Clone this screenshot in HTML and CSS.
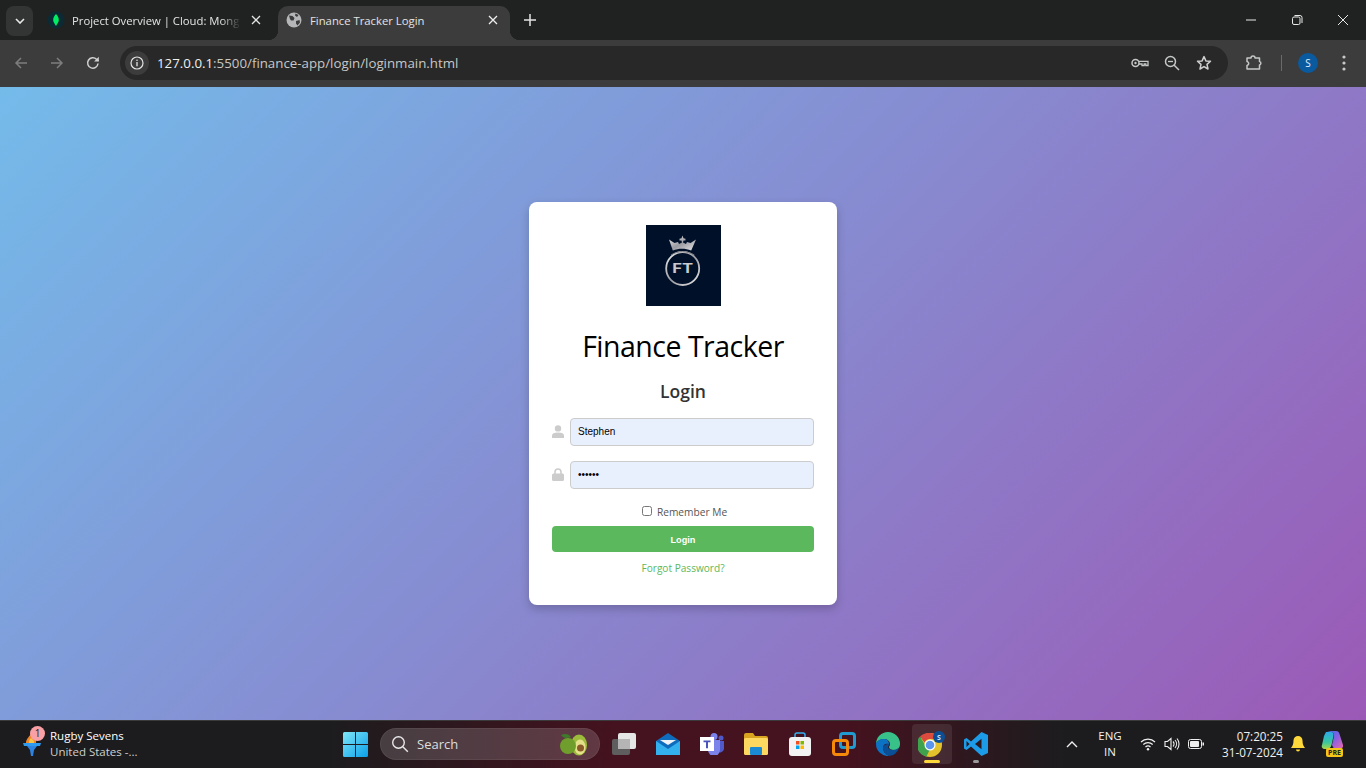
FILE: index.html

```html
<!DOCTYPE html>
<html>
<head>
<meta charset="UTF-8">
<title>Finance Tracker Login</title>
<link rel="stylesheet" href="styles.css">
</head>
<body>
<div id="tabstrip">
  <div class="tabdrop">
    <svg width="10" height="6" viewBox="0 0 10 6"><path d="M1 1l4 4 4-4" fill="none" stroke="#e8e8e8" stroke-width="1.6"/></svg>
  </div>
  <div class="tab">
    <svg class="favicon" width="18" height="18" viewBox="0 0 18 18"><circle cx="9" cy="9" r="8.5" fill="#0c2a33"/><path d="M9 3c2 2.200 2.800 4 2.800 6S10.500 12.500 9 15C7.500 12.500 6.200 11 6.200 9S7 5.200 9 3z" fill="#00ed64"/></svg>
    <span class="tabtitle fade">Project Overview | Cloud: Mong</span>
    <svg class="tabclose" width="10" height="10" viewBox="0 0 10 10"><path d="M1 1l8 8M9 1l-8 8" stroke="#e3e3e3" stroke-width="1.300"/></svg>
  </div>
  <div class="tab active">
    <svg class="favicon" width="16" height="16" viewBox="0 0 16 16"><circle cx="8" cy="8" r="7.500" fill="#b4b6b8"/><path d="M3 3.500l3.500.5 2 2-1 2.500-2.500 0-1-1.500zM9.500 1.500l3 1.500-1.500 2-2-1.500zM10 9l3.500-1 .5 2.500-2.500 3-1.500-2z" fill="#3c3c3c"/></svg>
    <span class="tabtitle">Finance Tracker Login</span>
    <svg class="tabclose" width="10" height="10" viewBox="0 0 10 10"><path d="M1 1l8 8M9 1l-8 8" stroke="#f0f0f0" stroke-width="1.300"/></svg>
  </div>
  <svg class="newtab" width="12" height="12" viewBox="0 0 12 12"><path d="M6 0v12M0 6h12" stroke="#e3e3e3" stroke-width="1.500"/></svg>
  <div class="winbtns">
    <svg width="12" height="12" viewBox="0 0 12 12"><path d="M1 6h10" stroke="#e8e8e8" stroke-width="1"/></svg>
    <svg width="12" height="12" viewBox="0 0 12 12"><rect x="1.500" y="3" width="7.500" height="7.500" rx="1.500" fill="none" stroke="#e8e8e8"/><path d="M3.500 1.500h5.500a2 2 0 0 1 2 2V9" fill="none" stroke="#e8e8e8"/></svg>
    <svg width="12" height="12" viewBox="0 0 12 12"><path d="M1 1l10 10M11 1L1 11" stroke="#e8e8e8" stroke-width="1"/></svg>
  </div>
</div>

<div id="toolbar">
  <svg class="navicon" width="16" height="16" viewBox="0 0 16 16"><path d="M14 8H3M8 3L3 8l5 5" fill="none" stroke="#7d7d7d" stroke-width="1.500"/></svg>
  <svg class="navicon" width="16" height="16" viewBox="0 0 16 16"><path d="M2 8h11M8 3l5 5-5 5" fill="none" stroke="#7d7d7d" stroke-width="1.500"/></svg>
  <svg class="navicon" width="16" height="16" viewBox="0 0 16 16"><path d="M13 8.500A5.200 5.200 0 1 1 11.500 4.300L13.500 6" fill="none" stroke="#d0d0d0" stroke-width="1.500"/><path d="M13.800 1.800v4.700H9.100z" fill="#d0d0d0"/></svg>
  <div id="omnibox">
    <div class="siteinfo">
      <svg width="14" height="14" viewBox="0 0 14 14"><circle cx="7" cy="7" r="6" fill="none" stroke="#e3e3e3" stroke-width="1.200"/><path d="M7 6v4.200" stroke="#e3e3e3" stroke-width="1.300"/><circle cx="7" cy="4.200" r=".8" fill="#e3e3e3"/></svg>
    </div>
    <div class="url"><span class="host">127.0.0.1</span>:5500/finance-app/login/loginmain.html</div>
    <div class="omniicons">
      <svg width="18" height="12" viewBox="0 0 18 12"><circle cx="4.500" cy="6" r="3.500" fill="none" stroke="#c4c7c5" stroke-width="1.500"/><circle cx="4.500" cy="6" r="1.200" fill="#c4c7c5"/><path d="M8 4.300h9v4.200h-2.200V7h-1.600v1.500H11V7H8" fill="none" stroke="#c4c7c5" stroke-width="1.300"/></svg>
      <svg width="16" height="16" viewBox="0 0 16 16"><circle cx="6.500" cy="6.500" r="5" fill="none" stroke="#c4c7c5" stroke-width="1.500"/><path d="M10 10l5 5" stroke="#c4c7c5" stroke-width="1.500"/><path d="M4 6.500h5" stroke="#c4c7c5" stroke-width="1.300"/></svg>
      <svg width="16" height="16" viewBox="0 0 16 16"><path d="M8 1.600l1.900 4.300 4.600.4-3.500 3.100 1 4.600L8 11.600 4 14l1-4.600L1.500 6.300l4.600-.4z" fill="none" stroke="#d0d0d0" stroke-width="1.500" stroke-linejoin="round"/></svg>
    </div>
  </div>
  <svg class="exticon" width="18" height="18" viewBox="0 0 18 18"><path d="M2 4h4a2 2 0 0 1 4 0h4.500v3.500a1.800 1.800 0 0 1 0 3.500V15H2v-3.500a2 2 0 0 0 1-3.500 2 2 0 0 0-1-.5z" fill="none" stroke="#c4c7c5" stroke-width="1.500" stroke-linejoin="round"/></svg>
  <div class="tooldivider"></div>
  <div class="avatar">S</div>
  <svg class="menuicon" width="4" height="16" viewBox="0 0 4 16"><circle cx="2" cy="2" r="1.600" fill="#c8c8c8"/><circle cx="2" cy="8" r="1.600" fill="#c8c8c8"/><circle cx="2" cy="14" r="1.600" fill="#c8c8c8"/></svg>
</div>

<div id="page">
  <div id="card">
    <svg class="logo" width="75" height="81" viewBox="0 0 75 81">
      <defs>
        <linearGradient id="silver" x1="0" y1="0" x2="1" y2="1">
          <stop offset="0" stop-color="#f0f0f0"/><stop offset=".5" stop-color="#9a9aa2"/><stop offset="1" stop-color="#e8e8e8"/>
        </linearGradient>
      </defs>
      <rect width="75" height="81" fill="#001029"/>
      <path d="M23 14.500l5.500 3.500 3.500-1 1 2 3-1.500-.5-2h-2v-1.800l2-.4 1-2.800 1 2.800 2 .4v1.800h-2l-.5 2 3 1.500 1-2 3.500 1 5.500-3.500-4.800 11c-6-2.500-12.400-2.500-18.400 0z" fill="url(#silver)"/>
      <circle cx="36.700" cy="43.500" r="16.500" fill="none" stroke="url(#silver)" stroke-width="1.800"/>
      <path d="M25 30c6.500-4.500 16-4.500 23.400 0" fill="none" stroke="#77777e" stroke-width="1"/>
      <text class="logotext" x="36.700" y="48" text-anchor="middle" fill="#c9c9ce" textLength="21" lengthAdjust="spacingAndGlyphs">FT</text>
    </svg>
    <h1>Finance Tracker</h1>
    <h2>Login</h2>
    <div class="field">
      <svg width="12" height="13" viewBox="0 0 12 13"><circle cx="6" cy="3.400" r="3.200" fill="#ccc"/><path d="M0 13v-2.500C0 8.500 2 7.500 6 7.500s6 1 6 3V13z" fill="#ccc"/></svg>
      <input type="text" value="Stephen">
    </div>
    <div class="field">
      <svg width="12" height="13" viewBox="0 0 12 13"><path d="M3 6V4a3 3 0 0 1 6 0v2" fill="none" stroke="#ccc" stroke-width="1.600"/><rect y="5.500" width="12" height="7.500" rx="1.500" fill="#ccc"/></svg>
      <input type="password" value="secret">
    </div>
    <label class="remember"><input type="checkbox"> Remember Me</label>
    <button class="loginbtn">Login</button>
    <a class="forgot" href="#">Forgot Password?</a>
  </div>
</div>

<div id="taskbar">
  <div class="widget">
    <div class="torch">
      <svg width="20" height="26" viewBox="0 0 20 26"><path d="M9 2c-1 4-5 5-5 10h10c1-4-1-7-5-10z" fill="#f0862c"/><path d="M9 7c-2 2-2 3-2 5h5c.5-2-1-3.500-3-5z" fill="#f7c448"/><path d="M1 12h18l-1 3H2z" fill="#2f9bf0"/><path d="M5 15h10l-3 4-1 6H9l-1-6z" fill="#2f83e0"/></svg>
      <span class="badge">1</span>
    </div>
    <div class="widgettext">
      <div class="w1">Rugby Sevens</div>
      <div class="w2">United States -...</div>
    </div>
  </div>
  <svg class="startbtn" width="25" height="25" viewBox="0 0 25 25">
    <defs><linearGradient id="win" x1="0" y1="0" x2="1" y2="1"><stop offset="0" stop-color="#7fe6f8"/><stop offset="1" stop-color="#0a9fe8"/></linearGradient></defs>
    <path d="M1.500 0H12v12H0V1.500A1.500 1.500 0 0 1 1.500 0zM13 0h10.500A1.500 1.500 0 0 1 25 1.500V12H13zM0 13h12v12H1.500A1.500 1.500 0 0 1 0 23.500zM13 13h12v10.500a1.500 1.500 0 0 1-1.500 1.500H13z" fill="url(#win)"/>
  </svg>
  <div class="searchbox">
    <svg width="18" height="18" viewBox="0 0 18 18"><circle cx="7.500" cy="7.500" r="5.800" fill="none" stroke="#e8e8e8" stroke-width="1.400"/><path d="M11.800 11.800l5 5" stroke="#e8e8e8" stroke-width="1.400"/></svg>
    <span>Search</span>
    <svg class="avocado" width="30" height="24" viewBox="0 0 30 24"><ellipse cx="20" cy="13" rx="8" ry="10.500" fill="#9cbb3a"/><ellipse cx="21" cy="15" rx="5.500" ry="7.500" fill="#e5e08a"/><circle cx="21.500" cy="16" r="3.500" fill="#8a5a2a"/><circle cx="9" cy="14" r="8" fill="#6f9e2c"/><path d="M2 3c4-2 8-1 10 2-4 2-8 1-10-2z" fill="#3f7a2a"/></svg>
  </div>
  <div class="apps">
    <div class="app"><svg width="24" height="22" viewBox="0 0 24 22"><rect y="6" width="18" height="16" rx="2" fill="#5e5e5e"/><rect x="6" width="18" height="16" rx="2" fill="#e6e6e6"/><rect x="6" y="6" width="12" height="10" fill="#b5b5b5"/></svg></div>
    <div class="app"><svg width="24" height="22" viewBox="0 0 24 22"><path d="M12 0l12 8v14H0V8z" fill="#0f6cbd"/><path d="M0 8l12 8 12-8v14H0z" fill="#33b0ee"/><path d="M4 7h16l-8 5z" fill="#eef3f8"/></svg></div>
    <div class="app"><svg width="24" height="22" viewBox="0 0 24 22"><circle cx="14" cy="3.500" r="3.500" fill="#7b83eb"/><circle cx="21" cy="5" r="2.500" fill="#5059c9"/><path d="M17 8h7v8a4 4 0 0 1-7 2z" fill="#5059c9"/><path d="M8 7h12v10a5 5 0 0 1-12 0z" fill="#7b83eb"/><rect y="4" width="14" height="14" fill="#fff"/><path d="M3.500 7.500h7v1.800H8v6H6v-6H3.500z" fill="#4b53bc"/></svg></div>
    <div class="app"><svg width="24" height="22" viewBox="0 0 24 22"><path d="M0 2a2 2 0 0 1 2-2h7l2 3h11a2 2 0 0 1 2 2v2H0z" fill="#d9a520"/><rect y="5" width="24" height="17" rx="1.500" fill="#fcd860"/><rect x="6" y="14" width="12" height="8" rx="1" fill="#1a8ad4"/></svg></div>
    <div class="app"><svg width="24" height="24" viewBox="0 0 24 24"><path d="M7 6V3a2 2 0 0 1 2-2h6a2 2 0 0 1 2 2v3" fill="none" stroke="#35b0ee" stroke-width="1.500"/><rect x="1" y="5" width="22" height="19" rx="3" fill="#f2f2f2"/><rect x="8" y="9" width="3.500" height="3.500" fill="#f25022"/><rect x="12.500" y="9" width="3.500" height="3.500" fill="#7fba00"/><rect x="8" y="13.500" width="3.500" height="3.500" fill="#00a4ef"/><rect x="12.500" y="13.500" width="3.500" height="3.500" fill="#ffb900"/></svg></div>
    <div class="app"><svg width="24" height="24" viewBox="0 0 24 24"><rect x="8.500" y="1.500" width="14" height="14" rx="2.500" fill="none" stroke="#1f9bd1" stroke-width="3"/><rect x="1.500" y="8.500" width="14" height="14" rx="2.500" fill="none" stroke="#f58a0a" stroke-width="3"/></svg></div>
    <div class="app"><svg width="24" height="24" viewBox="0 0 24 24"><path d="M12 0a12 12 0 0 1 12 12c0 4-3 6-6 6-3 0-5-1-5-3 0-1 1-1 1-3 0-3-3-5-6-5-4 0-8 3-8 5A12 12 0 0 1 12 0z" fill="#38c28a"/><path d="M0 12c0-3 4-5 8-5 3 0 5 2 5 5-3-1-6 0-6 4 0 3 2 6 6 8A12 12 0 0 1 0 12z" fill="#0c72c4"/><path d="M13 24c-4-2-6-5-6-8 0-2 2-4 6-4 0 2-1 2-1 3 0 2 2 3 5 3 2 0 4-1 6-2a12 12 0 0 1-10 8z" fill="#0a4f96"/></svg></div>
    <div class="app current">
      <svg width="28" height="26" viewBox="0 0 28 26"><circle cx="12" cy="14" r="12" fill="#e2c32c"/><path d="M12 2a12 12 0 0 1 10.400 6H12a6 6 0 0 0-5.500 3.500L2 5.500A12 12 0 0 1 12 2z" fill="#dd4b3e"/><path d="M2 5.500l5 8.500a6 6 0 0 0 5 4l-3.500 7.500A12 12 0 0 1 2 5.500z" fill="#3fa34d"/><circle cx="12" cy="14" r="5.500" fill="#fff"/><circle cx="12" cy="14" r="4.300" fill="#5a95ee"/><circle cx="21" cy="6" r="6" fill="#0a4f96"/><text class="chromebadge" x="21" y="8.500" text-anchor="middle" fill="#cfe4f7">S</text></svg>
      <div class="runbar wide"></div>
    </div>
    <div class="app">
      <svg width="24" height="24" viewBox="0 0 24 24"><path d="M17.500 0L24 3v18l-6.500 3L7 14.500 2.500 18 0 16.500V7.500L2.500 6 7 9.500zM17.500 6.800L11 12l6.500 5.200zM2.500 9v6L5.500 12z" fill="#1c9ce8"/></svg>
      <div class="runbar"></div>
    </div>
  </div>
  <div class="tray">
    <svg class="chev" width="12" height="7" viewBox="0 0 12 7"><path d="M1 6l5-5 5 5" fill="none" stroke="#f0f0f0" stroke-width="1.400"/></svg>
    <div class="lang">ENG<br>IN</div>
    <div class="sysicons">
      <svg width="16" height="14" viewBox="0 0 16 14"><path d="M1 5a10 10 0 0 1 14 0M3.300 7.500a7 7 0 0 1 9.400 0M5.500 10a3.800 3.800 0 0 1 5 0" fill="none" stroke="#f0f0f0" stroke-width="1.200"/><circle cx="8" cy="12.300" r="1.200" fill="#f0f0f0"/></svg>
      <svg width="16" height="14" viewBox="0 0 16 14"><path d="M1 4.500h2.500L7 1.500v11l-3.500-3H1z" fill="none" stroke="#f0f0f0" stroke-width="1.100"/><path d="M9 4.500a3.500 3.500 0 0 1 0 5M11 3a6 6 0 0 1 0 8M13 1.500a8.500 8.500 0 0 1 0 11" fill="none" stroke="#f0f0f0" stroke-width="1.100"/></svg>
      <svg width="16" height="10" viewBox="0 0 16 10"><rect x=".5" y=".5" width="13" height="9" rx="2" fill="none" stroke="#f0f0f0"/><rect x="2" y="2" width="9" height="6" rx="1" fill="#f0f0f0"/><rect x="14.500" y="3.500" width="1.500" height="3" fill="#f0f0f0"/></svg>
    </div>
    <div class="clock">07:20:25<br>31-07-2024</div>
    <svg class="bell" width="14" height="16" viewBox="0 0 14 16"><path d="M7 0a4.500 4.500 0 0 1 4.500 4.500c0 4 1 5.500 2.500 7.500H0c1.500-2 2.500-3.500 2.500-7.500A4.500 4.500 0 0 1 7 0z" fill="#ffd83b"/><path d="M5 13.500h4a2 2 0 0 1-4 0z" fill="#ffd83b"/></svg>
    <div class="copilot">
      <svg width="24" height="20" viewBox="0 0 24 20"><defs><linearGradient id="copr" x1="0" y1="0" x2="1" y2="1"><stop offset="0" stop-color="#3a6fe8"/><stop offset=".5" stop-color="#8a5fe0"/><stop offset="1" stop-color="#ee6aa8"/></linearGradient><linearGradient id="copl" x1="0" y1="0" x2="0" y2="1"><stop offset="0" stop-color="#2ea9e8"/><stop offset=".6" stop-color="#37c7a0"/><stop offset="1" stop-color="#a8d84a"/></linearGradient></defs><path d="M6 0h9c2 0 3 1 3.500 3L22 14c.5 2-1 4-3 4h-6l-2-4 2-9c.5-2-1-4-3-4z" fill="url(#copr)"/><path d="M5 1h5c2 0 3 1.500 2.500 4l-2 9c-.5 2-2 4-4.500 4H4c-2.500 0-4-2-3-4L3 5z" fill="url(#copl)"/></svg>
      <span class="pre">PRE</span>
    </div>
  </div>
</div>
</body>
</html>
```

FILE: styles.css

```css
html, body {
    margin: 0;
    height: 100%;
}
body {
    display: flex;
    flex-direction: column;
    height: 768px;
    overflow: hidden;
    font-family: "Open Sans", "Noto Sans", sans-serif;
}

/* browser chrome */
#tabstrip {
    height: 40px;
    flex: none;
    background: #202222;
    display: flex;
    align-items: flex-end;
    padding-left: 6px;
    color: #e3e3e3;
    font-size: 11.300px;
}
.tabdrop {
    width: 27px;
    height: 30px;
    margin-bottom: 4px;
    background: #333535;
    border-radius: 8px;
    display: flex;
    align-items: center;
    justify-content: center;
}
.tab {
    width: 245px;
    height: 34px;
    display: flex;
    align-items: center;
    padding: 0 17px 6px 14px;
    box-sizing: border-box;
    position: relative;
}
.tab.active {
    width: 232px;
    background: #3c3c3c;
    border-radius: 10px 10px 0 0;
    padding-left: 8px;
    padding-right: 12px;
}
.tab.active::before, .tab.active::after {
    content: "";
    position: absolute;
    bottom: 0;
    width: 10px;
    height: 10px;
}
.tab.active::before {
    left: -10px;
    background: radial-gradient(circle at 0 0, transparent 10px, #3c3c3c 10.5px);
}
.tab.active::after {
    right: -10px;
    background: radial-gradient(circle at 100% 0, transparent 10px, #3c3c3c 10.5px);
}
.favicon {
    flex: none;
}
.tabtitle {
    flex: 1;
    margin-left: 8px;
    white-space: nowrap;
}
.fade {
    margin-left: 7px;
    -webkit-mask-image: linear-gradient(to right, #000 88%, transparent);
    mask-image: linear-gradient(to right, #000 88%, transparent);
}
.tabclose {
    flex: none;
    margin-left: 10px;
}
.newtab {
    margin: 0 0 14px 14px;
}
.winbtns {
    margin-left: auto;
    display: flex;
    gap: 34px;
    padding: 0 17px 14px 0;
    align-self: flex-end;
}
.winbtns svg {
    display: block;
    width: 12px;
}

#toolbar {
    height: 47px;
    flex: none;
    background: #3c3c3c;
    display: flex;
    align-items: center;
    padding: 0 0 1px 13px;
    box-sizing: border-box;
}
.navicon {
    margin-right: 20px;
}
#omnibox {
    width: 1108px;
    height: 34px;
    margin-left: -1px;
    background: #282828;
    border-radius: 17px;
    display: flex;
    align-items: center;
    padding-left: 5px;
    box-sizing: border-box;
}
.siteinfo {
    width: 24px;
    height: 24px;
    border-radius: 50%;
    background: #3c3c3c;
    display: flex;
    align-items: center;
    justify-content: center;
}
.url {
    margin-left: 8px;
    color: #c7c7c7;
    font-size: 13.300px;
}
.url .host {
    color: #f0f0f0;
}
.omniicons {
    margin-left: auto;
    display: flex;
    align-items: center;
    gap: 15px;
    padding-right: 16px;
}
.omniicons svg:last-child {
    margin-left: 1px;
}
.exticon {
    margin-left: 17px;
}
.tooldivider {
    width: 1px;
    height: 16px;
    background: #6a6a6a;
    margin-left: 18px;
}
.avatar {
    width: 20px;
    height: 20px;
    margin-left: 16px;
    border-radius: 50%;
    background: #0a5aa0;
    color: #e3eefa;
    font-size: 10px;
    line-height: 20px;
    text-align: center;
}
.menuicon {
    margin-left: 24px;
}

/* login page */
#page {
    flex: 1;
    background: linear-gradient(135deg, #74bbea, #9b59b6);
    display: flex;
    align-items: center;
    justify-content: center;
}
#card {
    width: 308px;
    box-sizing: border-box;
    padding: 23px 23px 29px;
    background: white;
    border-radius: 8px;
    box-shadow: 0 4px 10px rgba(0, 0, 0, 0.2);
    display: flex;
    flex-direction: column;
    align-items: center;
}
.logo {
    display: block;
}
.logotext {
    font-family: "Inter", "Liberation Sans", sans-serif;
    font-size: 13px;
    font-weight: 700;
}
h1 {
    margin: 18px 0 0;
    font-size: 28.500px;
    line-height: 44px;
    letter-spacing: -0.500px;
    font-weight: normal;
    color: #000;
}
h2 {
    margin: 11px 0 1px;
    font-size: 17.500px;
    line-height: 24px;
    font-weight: 600;
    color: #333;
}
.field {
    width: 100%;
    display: flex;
    align-items: center;
    justify-content: space-between;
    margin-top: 14px;
}
.field + .field {
    margin-top: 15px;
}
.field svg {
    margin-bottom: 2px;
}
.field input {
    width: 244px;
    height: 28px;
    box-sizing: border-box;
    padding: 0 7px 2px;
    border: 1px solid #ccc;
    border-radius: 4px;
    background: #e8f0fe;
    font-family: "Liberation Sans", sans-serif;
    font-size: 10px;
    color: #000;
    outline: none;
}
.remember {
    margin: 15px 0 -1px;
    padding-left: 3px;
    display: flex;
    align-items: center;
    gap: 5px;
    font-size: 10.200px;
    line-height: 16px;
    color: #555;
}
.remember input {
    width: 10px;
    height: 10px;
    margin: 0 0 2px;
}
.loginbtn {
    width: 100%;
    height: 26px;
    margin-top: 7px;
    padding: 1px 0 0;
    border: 0;
    border-radius: 4px;
    background: #5cb85c;
    color: white;
    font-family: "Liberation Sans", sans-serif;
    font-size: 9.200px;
    font-weight: bold;
}
.forgot {
    margin-top: 8px;
    font-size: 10.100px;
    line-height: 16px;
    color: #5cb85c;
    text-decoration: none;
}

/* windows taskbar */
#taskbar {
    height: 48px;
    flex: none;
    box-sizing: border-box;
    border-top: 1px solid #3a3a3a;
    background: linear-gradient(to right, #1c1c1e 0, #1c1c1e 24%, #45121f 45%, #45121f 62%, #1c1c1e 78%);
    display: flex;
    align-items: center;
    padding: 0 0 1px 22px;
    color: #f0f0f0;
    font-size: 12px;
}
.widget {
    width: 321px;
    flex: none;
    display: flex;
    align-items: center;
    gap: 8px;
}
.torch {
    position: relative;
    width: 20px;
    height: 26px;
    flex: none;
}
.badge {
    position: absolute;
    top: -5px;
    left: 8px;
    width: 15px;
    height: 15px;
    border-radius: 50%;
    background: #f9a0a6;
    color: #222;
    font-size: 10px;
    line-height: 15px;
    text-align: center;
}
.widgettext {
    line-height: 16px;
    font-size: 11.500px;
}
.w1 {
    color: #fff;
}
.w2 {
    color: #cfcfcf;
}
.startbtn {
    flex: none;
}
.searchbox {
    width: 220px;
    height: 32px;
    margin-left: 12px;
    flex: none;
    box-sizing: border-box;
    padding: 0 10px;
    border-radius: 16px;
    background: rgba(255, 255, 255, 0.16);
    border: 1px solid rgba(255, 255, 255, 0.06);
    display: flex;
    align-items: center;
    gap: 8px;
    font-size: 13px;
    color: #ddd;
}
.avocado {
    margin-left: auto;
}
.apps {
    margin-left: 4px;
    display: flex;
    gap: 4px;
}
.app {
    width: 40px;
    height: 40px;
    position: relative;
    display: flex;
    align-items: center;
    justify-content: center;
    border-radius: 4px;
}
.app.current {
    background: rgba(255, 255, 255, 0.09);
}
.runbar {
    position: absolute;
    bottom: 1px;
    left: 17px;
    width: 6px;
    height: 3px;
    border-radius: 2px;
    background: #9a9a9a;
}
.runbar.wide {
    left: 12px;
    width: 16px;
    background: #ffd83b;
}
.tray {
    margin-left: auto;
    display: flex;
    align-items: center;
    padding-right: 21px;
}
.lang {
    margin-left: 19px;
    width: 26px;
    text-align: center;
    line-height: 16px;
    font-size: 11.500px;
}
.sysicons {
    margin-left: 17px;
    display: flex;
    align-items: center;
    gap: 8px;
}
.clock {
    width: 76px;
    margin-left: 3px;
    text-align: right;
    line-height: 16px;
    font-size: 11.700px;
}
.bell {
    margin-left: 8px;
}
.copilot {
    margin-left: 16px;
    position: relative;
    width: 24px;
    height: 26px;
}
.pre {
    position: absolute;
    left: 5px;
    bottom: 0;
    padding: 0 2px;
    border-radius: 2px;
    background: #f5c518;
    color: #222;
    font-size: 7px;
    line-height: 9px;
    font-weight: bold;
}
.chromebadge {
    font-size: 7px;
    font-weight: bold;
}
```
